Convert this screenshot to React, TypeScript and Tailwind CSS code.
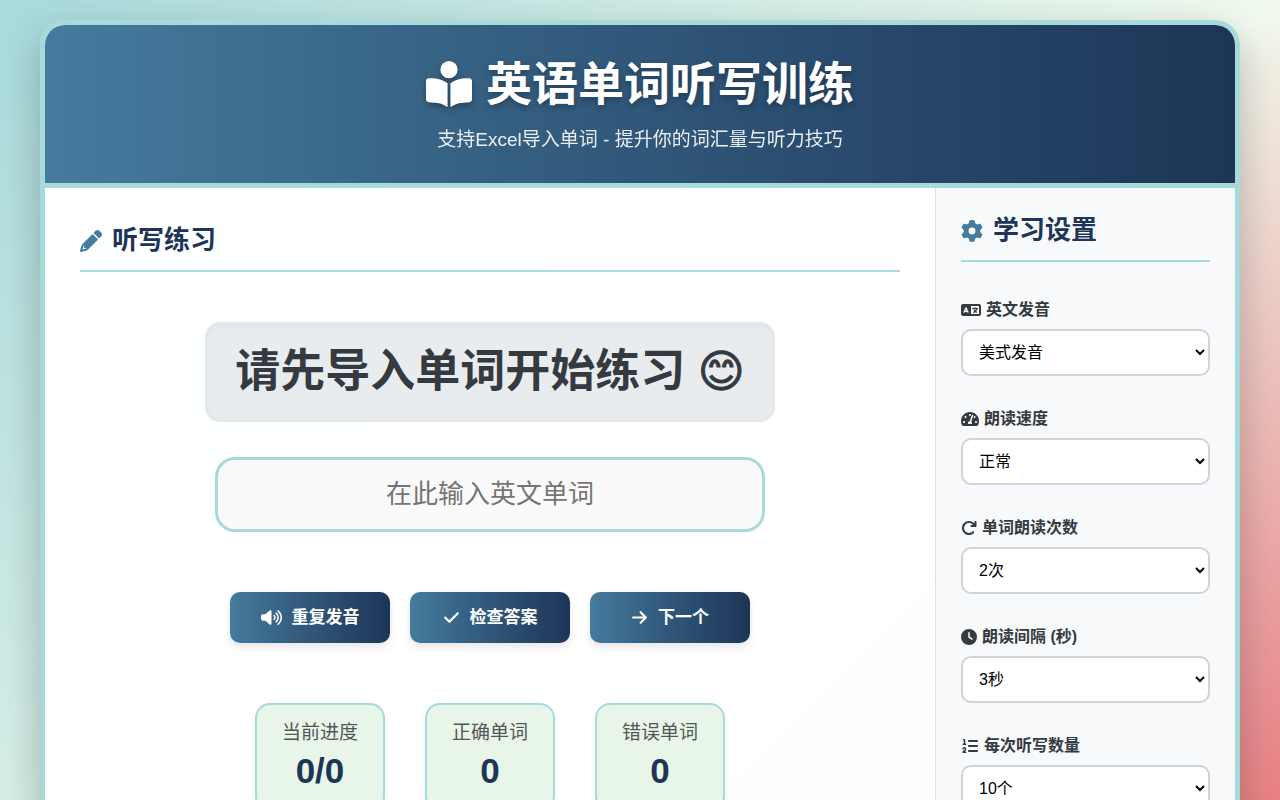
import type { ComponentType } from "react";
import { FaTachometerAlt } from "react-icons/fa";
import {
    FaArrowRight,
    FaArrowRotateRight,
    FaBookOpenReader,
    FaCheck,
    FaClock,
    FaGear,
    FaLanguage,
    FaListOl,
    FaVolumeHigh,
} from "react-icons/fa6";

type Icon = ComponentType<{ className?: string }>;

function PencilIcon({ className }: { className?: string }) {
    return (
        <svg viewBox="0 0 512 512" fill="currentColor" aria-hidden="true" className={className}>
            <path d="M421.7 220.3L188.5 453.4L154.6 419.5L158.1 416H112C103.2 416 96 408.8 96 400V353.9L92.51 357.4C87.78 362.2 84.31 368 82.42 374.4L59.44 452.6L137.6 429.6C143.1 427.7 149.8 424.2 154.6 419.5L188.5 453.4C178.1 463.8 165.2 471.5 151.1 475.6L30.77 511C22.35 513.5 13.24 511.2 7.03 504.1C.82 498.8-1.5 489.7 .98 481.2L36.37 360.9C40.53 346.8 48.16 333.9 58.57 323.5L291.7 90.34L421.7 220.3zM492.7 58.75C517.7 83.74 517.7 124.3 492.7 149.3L444.3 197.7L314.3 67.72L362.7 19.32C387.7-5.68 428.3-5.68 453.3 19.32L492.7 58.75z" />
        </svg>
    );
}

const settings: { id: string; label: string; icon: Icon; size: string; value: string }[] = [
    { id: "accent", label: "英文发音", icon: FaLanguage, size: "h-4 w-5", value: "美式发音" },
    { id: "speed", label: "朗读速度", icon: FaTachometerAlt, size: "h-4 w-[18px]", value: "正常" },
    { id: "repeat", label: "单词朗读次数", icon: FaArrowRotateRight, size: "h-4 w-4", value: "2次" },
    { id: "interval", label: "朗读间隔 (秒)", icon: FaClock, size: "h-4 w-4", value: "3秒" },
    { id: "amount", label: "每次听写数量", icon: FaListOl, size: "h-4 w-[18px]", value: "10个" },
];

const actions: { label: string; icon: Icon; size: string }[] = [
    { label: "重复发音", icon: FaVolumeHigh, size: "h-[17px] w-[21px]" },
    { label: "检查答案", icon: FaCheck, size: "h-[17px] w-[17px]" },
    { label: "下一个", icon: FaArrowRight, size: "h-[17px] w-[17px]" },
];

const stats = [
    { label: "当前进度", value: "0/0" },
    { label: "正确单词", value: "0" },
    { label: "错误单词", value: "0" },
];

function SectionTitle({ icon: Icon, children }: { icon: Icon; children: string }) {
    return (
        <h2 className="flex items-center gap-2.5 border-b-2 border-[#a8dadc] pb-3 text-[26px] leading-[35px] font-bold text-[#1d3557]">
            <Icon className="h-[22px] w-[22px] text-[#457b9d]" />
            {children}
        </h2>
    );
}

export default function App() {
    return (
        <div className="flex min-h-[1270px] flex-col bg-[linear-gradient(135deg,#a8dadc_0%,#f1faee_50%,#e63946_100%)] p-5 font-['Liberation_Sans','Noto_Sans_CJK_SC',sans-serif] text-[#343a40]">
            <div className="mx-auto flex w-full max-w-[1200px] flex-1 flex-col overflow-hidden rounded-[25px] border-5 border-[#a8dadc] bg-white/98 shadow-[0_15px_40px_rgba(0,0,0,0.25)]">
                <header className="border-b-5 border-[#a8dadc] bg-linear-to-r from-[#457b9d] to-[#1d3557] px-5 pt-[25px] pb-[30px] text-center text-white">
                    <h1 className="flex items-center justify-center gap-3.5 text-[46px] leading-[68px] font-bold text-shadow-[0_3px_6px_rgba(0,0,0,0.3)]">
                        <FaBookOpenReader className="h-[46px] w-[46px] drop-shadow-[0_3px_3px_rgba(0,0,0,0.3)]" />
                        英语单词听写训练
                    </h1>
                    <p className="mt-2 text-[19px] leading-[27px] opacity-90">
                        支持Excel导入单词 - 提升你的词汇量与听力技巧
                    </p>
                </header>

                <div className="flex flex-1">
                    <main className="flex-1 p-[35px]">
                        <SectionTitle icon={PencilIcon}>听写练习</SectionTitle>

                        <div className="mt-[50px] flex flex-col items-center">
                            <div className="rounded-[15px] border-2 border-[#e4e8eb] bg-[#e9ecef] px-7 py-4 text-[45px] leading-[64px] font-bold shadow-[inset_0_2px_5px_rgba(0,0,0,0.04)]">
                                请先导入单词开始练习{" "}
                                <span className="font-['DejaVu_Sans',sans-serif] [-webkit-text-stroke:1px_#343a40]">😊</span>
                            </div>
                            <input
                                type="text"
                                aria-label="在此输入英文单词"
                                placeholder="在此输入英文单词"
                                className="mt-[35px] h-[75px] w-full max-w-[550px] rounded-[20px] border-3 border-[#a8dadc] bg-[#fafafa] px-5 text-center text-[26px] placeholder:text-[#757575]"
                            />
                            <div className="mt-[60px] flex flex-wrap justify-center gap-5">
                                {actions.map(({ label, icon: Icon, size }) => (
                                    <button
                                        key={label}
                                        type="button"
                                        className="flex h-[51px] w-40 items-center justify-center gap-2.5 rounded-[10px] bg-linear-to-r from-[#457b9d] to-[#1d3557] text-[17px] font-bold text-white shadow-[0_4px_8px_rgba(0,0,0,0.1)]"
                                    >
                                        <Icon className={size} />
                                        {label}
                                    </button>
                                ))}
                            </div>
                            <div className="mt-[60px] flex flex-wrap justify-center gap-10">
                                {stats.map((stat) => (
                                    <div
                                        key={stat.label}
                                        className="rounded-[15px] border-2 border-[#a8dadc] bg-[#e8f5e9] px-[25px] py-4 text-center shadow-[0_4px_8px_rgba(0,0,0,0.05)]"
                                    >
                                        <div className="text-[19px] leading-6 text-[#555555]">{stat.label}</div>
                                        <div className="mt-1 text-[35px] leading-[44px] font-bold text-[#1d3557]">
                                            {stat.value}
                                        </div>
                                    </div>
                                ))}
                            </div>
                        </div>
                    </main>

                    <aside className="w-[300px] border-l border-[#dee2e6] bg-[#f8f9fb] p-[25px]">
                        <SectionTitle icon={FaGear}>学习设置</SectionTitle>

                        <div className="mt-9 flex flex-col gap-[31px]">
                            {settings.map(({ id, label, icon: Icon, size, value }) => (
                                <div key={id}>
                                    <label htmlFor={id} className="flex items-center gap-[5px] leading-6 font-bold">
                                        <Icon className={size} />
                                        {label}
                                    </label>
                                    <select
                                        id={id}
                                        className="mt-[7px] h-[47px] w-full rounded-[10px] border-2 border-[#ced4da] bg-white px-3 text-base text-black"
                                    >
                                        <option>{value}</option>
                                    </select>
                                </div>
                            ))}
                        </div>
                    </aside>
                </div>
            </div>
        </div>
    );
}
